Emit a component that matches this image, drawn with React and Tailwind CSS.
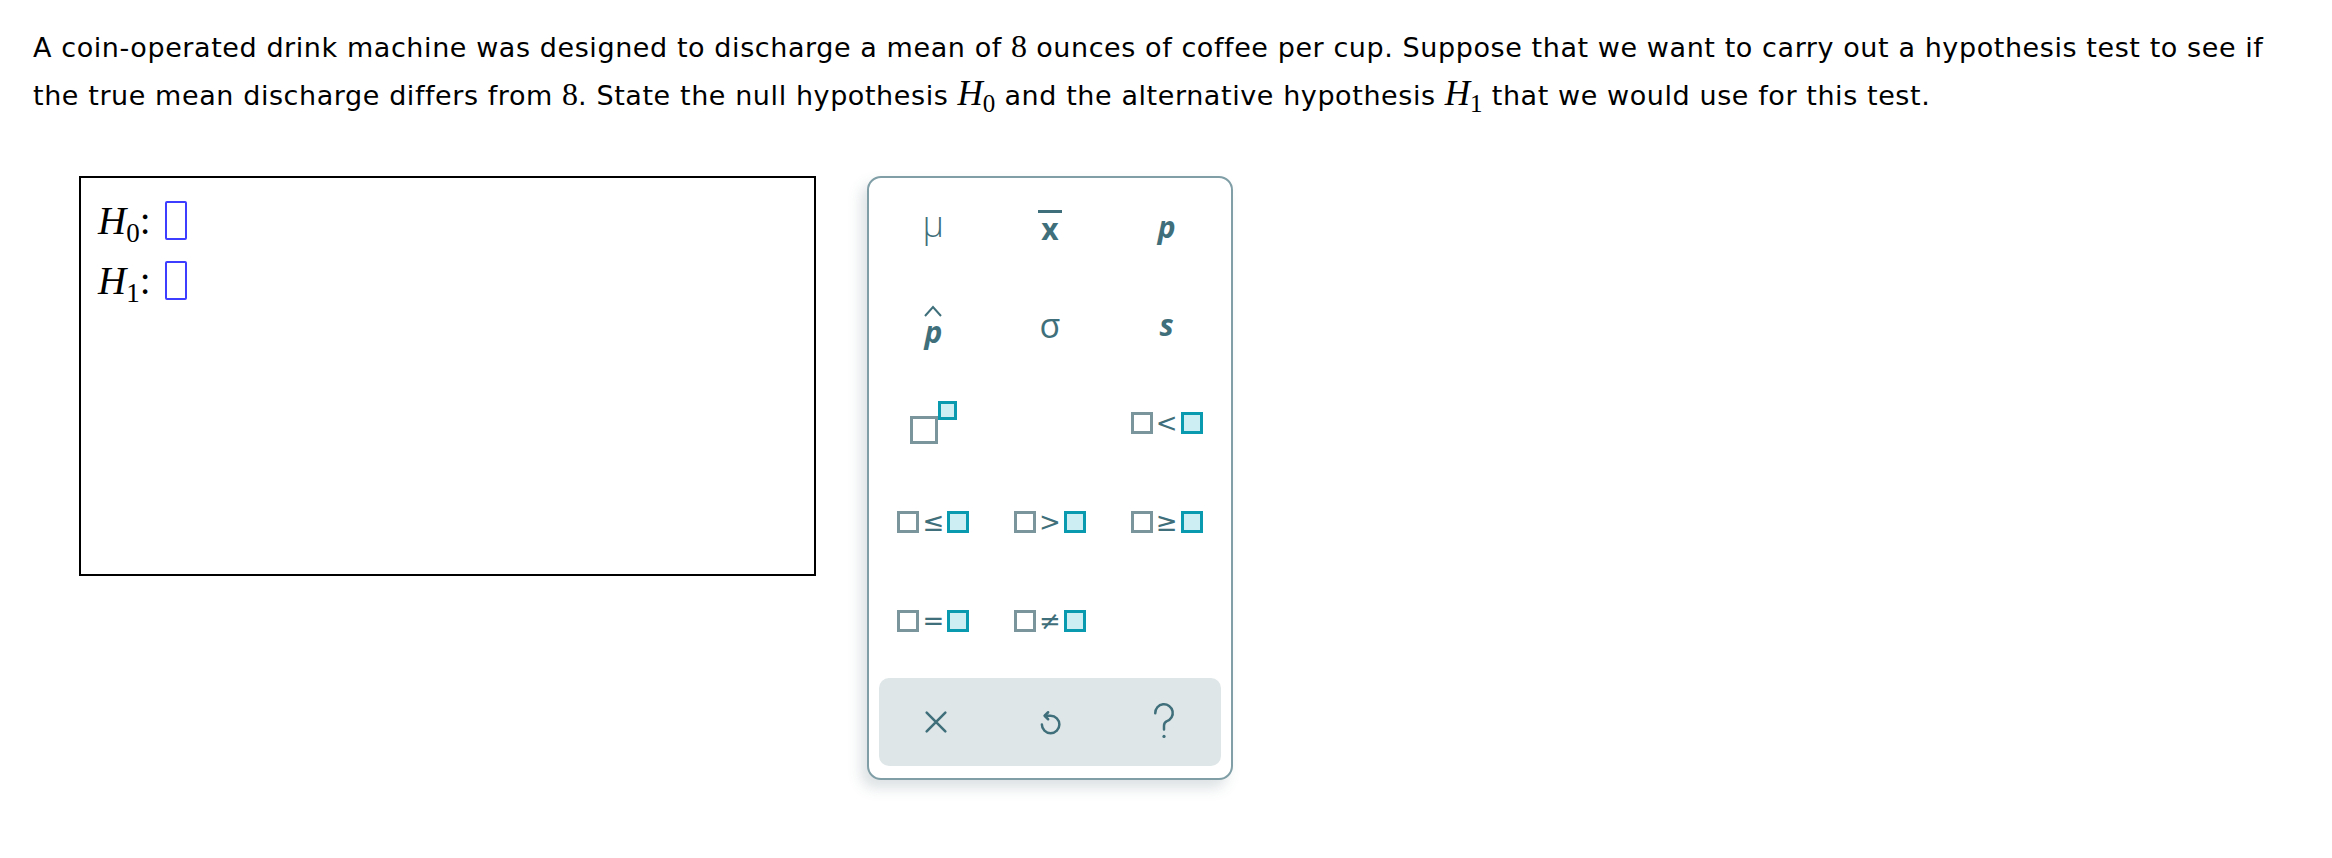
import React from "react";

const teal = "#3f6f7a";

const Var = ({ name, sub }) => (
  <span className="font-['Liberation_Serif',serif] text-[35px] leading-none whitespace-nowrap tracking-normal">
    <i>{name}</i>
    <span className="text-[25px] relative top-[7px]">{sub}</span>
  </span>
);

const GrayBox = ({ size = "w-[22px] h-[22px]" }) => (
  <span className={`inline-block ${size} border-[3px] border-[#7a959c] bg-white`} />
);

const TealBox = ({ size = "w-[22px] h-[22px]" }) => (
  <span className={`inline-block ${size} border-[3px] border-[#0a9ab0] bg-[#cdeef2]`} />
);

const Relation = ({ op }) => (
  <span className="flex items-center gap-[3px]">
    <GrayBox />
    <span className="text-[26px] leading-none text-[#3f6f7a] font-['DejaVu_Sans',sans-serif]">
      {op}
    </span>
    <TealBox />
  </span>
);

const Key = ({ children }) => (
  <button className="h-[99px] flex items-center justify-center text-[#3f6f7a]">
    {children}
  </button>
);

const Keypad = () => (
  <div className="w-[366px] h-[604px] rounded-[14px] border-2 border-[#7f9ea6] bg-white shadow-[-6px_8px_14px_rgba(60,90,100,0.18)] flex flex-col">
    <div className="grid grid-cols-3 px-[6px] -mt-[3px] font-['Open_Sans',sans-serif]">
      <Key>
        <span className="text-[36px] font-light leading-none -mt-[1px]">μ</span>
      </Key>
      <Key>
        <span className="text-[30px] font-bold leading-none border-t-[3px] border-[#3f6f7a] px-[3px] pt-[1px] mt-[4px]">
          x
        </span>
      </Key>
      <Key>
        <span className="text-[30px] font-bold italic leading-none mt-[5px]">p</span>
      </Key>
      <Key>
        <span className="flex flex-col items-center mt-[4px]">
          <svg width="20" height="12" viewBox="0 0 20 12" fill="none" stroke={teal} strokeWidth="2">
            <path d="M2 11 L10 2 L18 11" />
          </svg>
          <span className="text-[30px] font-bold italic leading-none">p</span>
        </span>
      </Key>
      <Key>
        <span className="text-[34px] leading-none mt-[2px]">σ</span>
      </Key>
      <Key>
        <span className="text-[30px] font-bold italic leading-none mt-[2px]">s</span>
      </Key>
      <Key>
        <span className="flex items-start mt-[2px]">
          <GrayBox size="w-[28px] h-[28px] mt-[12px]" />
          <TealBox size="w-[19px] h-[19px] -mt-[3px]" />
        </span>
      </Key>
      <Key />
      <Key>
        <Relation op="<" />
      </Key>
      <Key>
        <Relation op="≤" />
      </Key>
      <Key>
        <Relation op=">" />
      </Key>
      <Key>
        <Relation op="≥" />
      </Key>
      <Key>
        <Relation op="=" />
      </Key>
      <Key>
        <Relation op="≠" />
      </Key>
      <Key />
    </div>
    <div className="mx-[10px] mt-[8px] h-[88px] rounded-[10px] bg-[#dfe6e8] grid grid-cols-3">
      <button className="flex items-center justify-center">
        <svg width="28" height="28" viewBox="0 0 24 24" fill="none" stroke={teal} strokeWidth="2.2" strokeLinecap="round">
          <path d="M4 4 L20 20 M20 4 L4 20" />
        </svg>
      </button>
      <button className="flex items-center justify-center">
        <svg width="30" height="30" viewBox="0 0 24 24" fill="none" stroke={teal} strokeWidth="2" strokeLinecap="round" strokeLinejoin="round">
          <path d="M5.5 14 A7 7 0 1 0 12.5 7 L8 7" />
          <path d="M10.5 4.2 L7.7 7 L10.5 9.8" />
        </svg>
      </button>
      <button className="flex items-center justify-center">
        <svg width="30" height="40" viewBox="0 0 24 32" fill="none" stroke={teal} strokeWidth="2" strokeLinecap="round">
          <path d="M5 9 A7 7 0 1 1 14 15.5 Q12 16.5 12 19 L12 22" />
          <circle cx="12" cy="27.5" r="1.3" fill={teal} stroke="none" />
        </svg>
      </button>
    </div>
  </div>
);

export default function App() {
  return (
    <div className="min-h-[858px] bg-white pt-[24px] pl-[33px] font-['DejaVu_Sans',Verdana,sans-serif] text-black">
      <p className="text-[27px] leading-[48px] tracking-[0.58px] whitespace-nowrap">
        A coin-operated drink machine was designed to discharge a mean of{" "}
        <span className="font-['Liberation_Serif',serif] text-[32px] leading-none tracking-normal">8</span> ounces of coffee per cup.
        Suppose that we want to carry out a hypothesis test to see if
        <br />
        the true mean discharge differs from{" "}
        <span className="font-['Liberation_Serif',serif] text-[32px] leading-none tracking-normal">8</span>. State the null
        hypothesis <Var name="H" sub="0" /> and the alternative hypothesis <Var name="H" sub="1" /> that we
        would use for this test.
      </p>

      <div className="flex items-start gap-[51px] ml-[46px] mt-[56px]">
        <div className="w-[737px] h-[400px] border-2 border-black px-[17px] pt-[22px] flex flex-col gap-[20px]">
          {["0", "1"].map((s) => (
            <div key={s} className="flex items-center gap-[14px] h-[40px]">
              <span className="font-['Liberation_Serif',serif] text-[39px] leading-none">
                <i>H</i>
                <span className="text-[27px] relative top-[8px]">{s}</span>:
              </span>
              <span className="inline-block w-[22px] h-[39px] border-2 border-[#3d3dff] rounded-[2px]" />
            </div>
          ))}
        </div>
        <Keypad />
      </div>
    </div>
  );
}
